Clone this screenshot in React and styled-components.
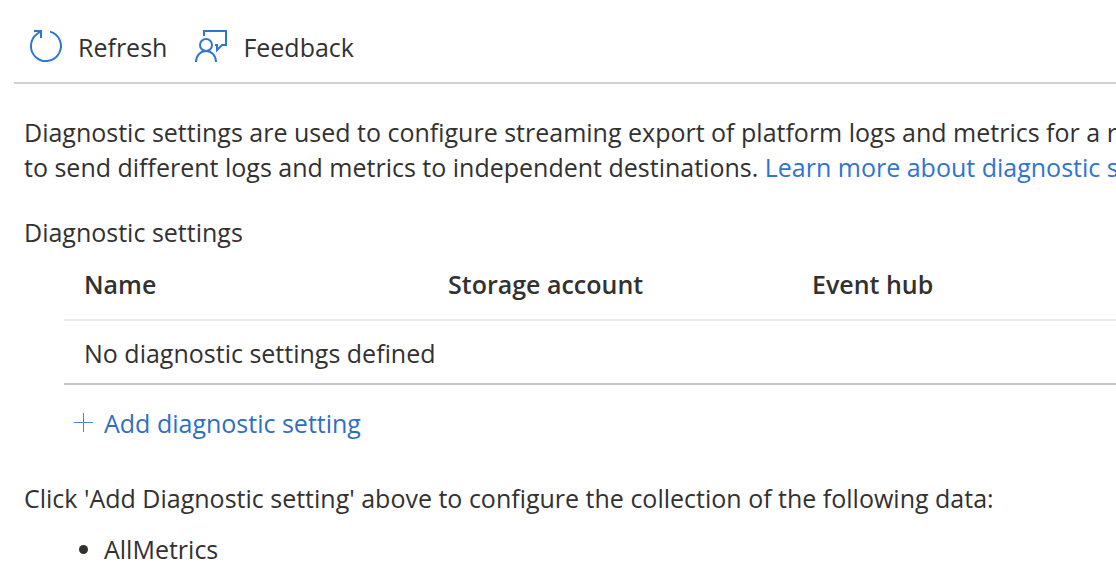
import React from "react";
import styled, { createGlobalStyle } from "styled-components";

const GlobalStyle = createGlobalStyle`
  * { box-sizing: border-box; }
  body {
    margin: 0;
    overflow: hidden;
    background: #fff;
    color: #323130;
    font-family: "Open Sans", "Noto Sans", sans-serif;
    font-size: 25px;
    line-height: 35px;
  }
`;

const Page = styled.main`
  padding: 12px 0 16px 14px;
  overflow: hidden;
`;

const Toolbar = styled.div`
  display: flex;
  gap: 28px;
  height: 72px;
  padding: 0 16px;
  border-bottom: 2px solid #d2d0ce;
`;

const ToolButton = styled.button`
  display: flex;
  align-items: center;
  gap: 16px;
  padding: 0;
  border: 0;
  background: none;
  color: inherit;
  font: inherit;
  cursor: pointer;

  svg { flex: none; }
`;

const Content = styled.div`
  padding: 31px 0 0 10px;
`;

const Text = styled.p`
  margin: 0 0 ${(p) => p.$gap || 0}px;
  white-space: nowrap;
`;

const Link = styled.a`
  color: #2f74d0;
  text-decoration: none;
`;

const SettingsBlock = styled.section`
  padding-left: 40px;
  margin-bottom: 40px;
`;

const Table = styled.table`
  min-width: 100%;
  width: 1092px;
  table-layout: fixed;
  border-collapse: collapse;
  text-align: left;
`;

const HeadCell = styled.th`
  height: 70px;
  padding: 0 20px;
  border-bottom: 2px solid #edebe9;
  font-weight: 600;
`;

const Cell = styled.td`
  height: 64px;
  padding: 2px 20px 0;
  border-bottom: 2px solid #c8c6c4;
`;

const AddButton = styled(ToolButton)`
  gap: 10px;
  margin: 21px 0 0 10px;
  color: #2f6fc0;
`;

const DataList = styled.ul`
  margin: 0;
  padding-left: 80px;
`;

function RefreshIcon() {
  return (
    <svg width="32" height="34" viewBox="0 0 32 34" fill="none" stroke="#2f76d2" strokeWidth="2" aria-hidden="true">
      <path d="M20 1.6A15 15 0 1 1 7 4L11 1" />
      <path d="M4 1H11V8" />
    </svg>
  );
}

function FeedbackIcon() {
  return (
    <svg width="32" height="34" viewBox="0 0 32 34" fill="none" stroke="#2f76d2" strokeWidth="2" aria-hidden="true">
      <path d="M9 6V1H31V15H27L22 20V15H20" />
      <circle cx="11" cy="15" r="6" />
      <path d="M1 32C1 25.5 5.5 21 11 21S21 25.5 21 32" />
    </svg>
  );
}

function PlusIcon() {
  return (
    <svg width="20" height="22" viewBox="0 0 20 22" stroke="#4d7fe0" aria-hidden="true">
      <path d="M9.5 0V19M0 9.5H19" />
    </svg>
  );
}

export default function App() {
  return (
    <>
      <GlobalStyle />
      <Page>
        <Toolbar>
          <ToolButton type="button"><RefreshIcon />Refresh</ToolButton>
          <ToolButton type="button"><FeedbackIcon />Feedback</ToolButton>
        </Toolbar>
        <Content>
          <Text $gap={30}>
            Diagnostic settings are used to configure streaming export of platform logs and metrics for a resource
            <br />
            to send different logs and metrics to independent destinations.{" "}
            <Link href="#learn">Learn more about diagnostic settings</Link>
          </Text>
          <Text id="settings-title">Diagnostic settings</Text>
          <SettingsBlock>
            <Table aria-labelledby="settings-title">
              <thead>
                <tr>
                  <HeadCell scope="col">Name</HeadCell>
                  <HeadCell scope="col">Storage account</HeadCell>
                  <HeadCell scope="col">Event hub</HeadCell>
                </tr>
              </thead>
              <tbody>
                <tr><Cell colSpan={3}>No diagnostic settings defined</Cell></tr>
              </tbody>
            </Table>
            <AddButton type="button"><PlusIcon />Add diagnostic setting</AddButton>
          </SettingsBlock>
          <Text $gap={16}>Click 'Add Diagnostic setting' above to configure the collection of the following data:</Text>
          <DataList><li>AllMetrics</li></DataList>
        </Content>
      </Page>
    </>
  );
}
